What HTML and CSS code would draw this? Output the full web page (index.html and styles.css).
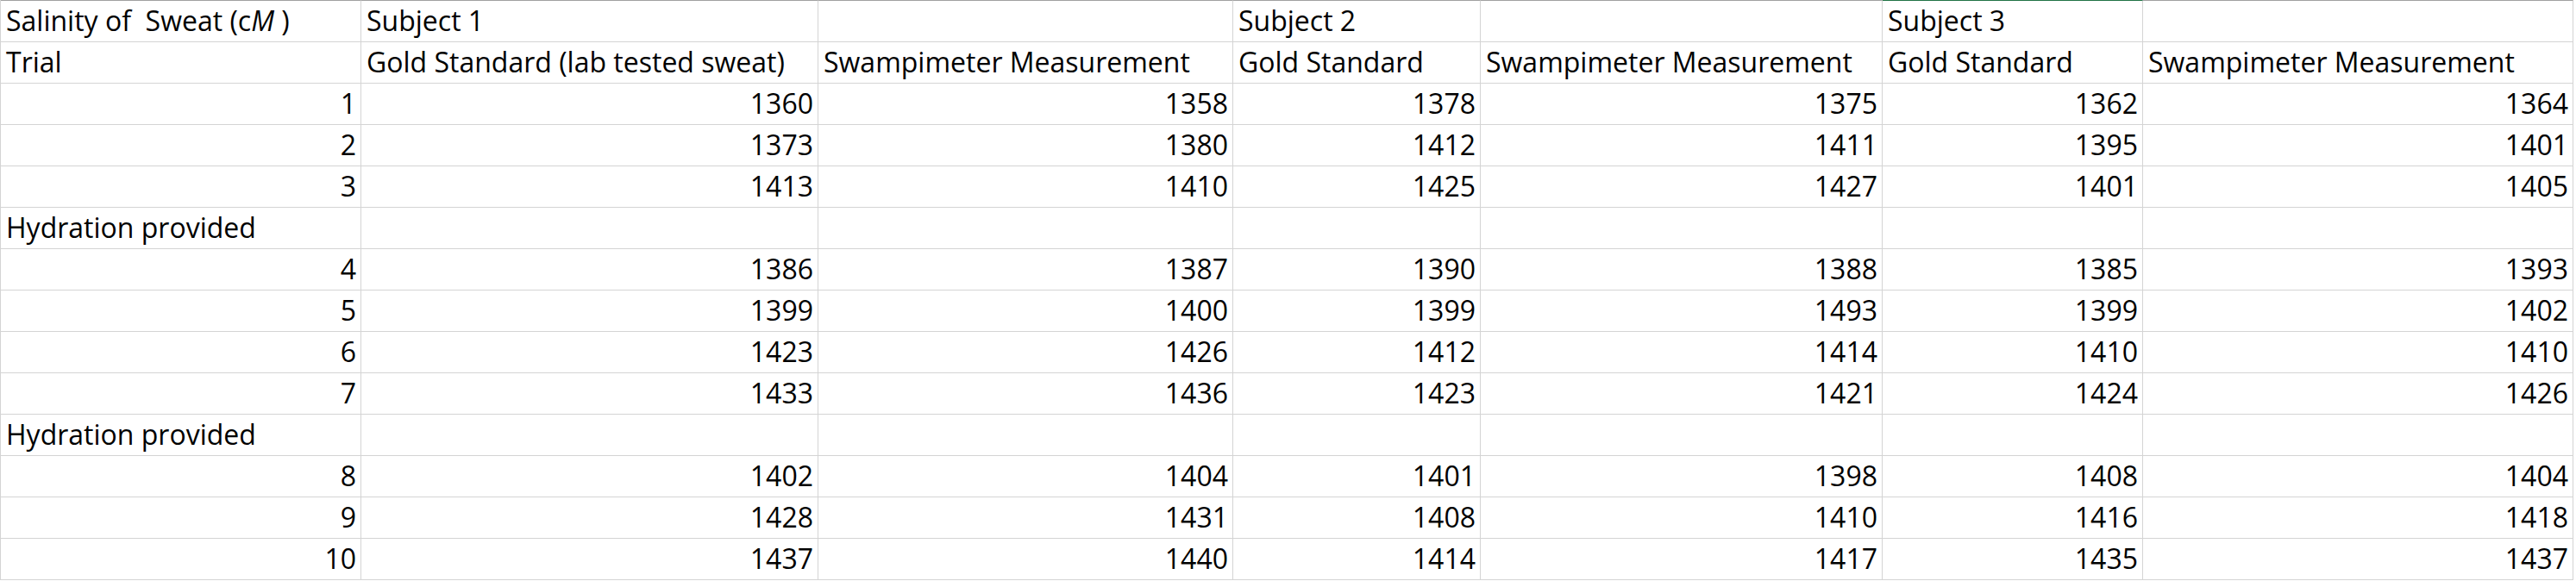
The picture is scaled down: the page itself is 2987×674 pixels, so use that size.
FILE: index.html
```html
<!DOCTYPE html>
<html lang="en">
<head>
<meta charset="utf-8">
<title>Salinity of Sweat</title>
<link rel="stylesheet" href="styles.css">
</head>
<body>
<div class="sheet">
  <div class="cell top">Salinity of  Sweat (c<i>M</i> )</div>
  <div class="cell top">Subject 1</div>
  <div class="cell top"></div>
  <div class="cell top">Subject 2</div>
  <div class="cell top"></div>
  <div class="cell top active">Subject 3</div>
  <div class="cell top"></div>

  <div class="cell">Trial</div>
  <div class="cell">Gold Standard (lab tested sweat)</div>
  <div class="cell">Swampimeter Measurement</div>
  <div class="cell">Gold Standard</div>
  <div class="cell">Swampimeter Measurement</div>
  <div class="cell">Gold Standard</div>
  <div class="cell">Swampimeter Measurement</div>

  <div class="cell num">1</div><div class="cell num">1360</div><div class="cell num">1358</div><div class="cell num">1378</div><div class="cell num">1375</div><div class="cell num">1362</div><div class="cell num">1364</div>
  <div class="cell num">2</div><div class="cell num">1373</div><div class="cell num">1380</div><div class="cell num">1412</div><div class="cell num">1411</div><div class="cell num">1395</div><div class="cell num">1401</div>
  <div class="cell num">3</div><div class="cell num">1413</div><div class="cell num">1410</div><div class="cell num">1425</div><div class="cell num">1427</div><div class="cell num">1401</div><div class="cell num">1405</div>

  <div class="cell">Hydration provided</div><div class="cell"></div><div class="cell"></div><div class="cell"></div><div class="cell"></div><div class="cell"></div><div class="cell"></div>

  <div class="cell num">4</div><div class="cell num">1386</div><div class="cell num">1387</div><div class="cell num">1390</div><div class="cell num">1388</div><div class="cell num">1385</div><div class="cell num">1393</div>
  <div class="cell num">5</div><div class="cell num">1399</div><div class="cell num">1400</div><div class="cell num">1399</div><div class="cell num">1493</div><div class="cell num">1399</div><div class="cell num">1402</div>
  <div class="cell num">6</div><div class="cell num">1423</div><div class="cell num">1426</div><div class="cell num">1412</div><div class="cell num">1414</div><div class="cell num">1410</div><div class="cell num">1410</div>
  <div class="cell num">7</div><div class="cell num">1433</div><div class="cell num">1436</div><div class="cell num">1423</div><div class="cell num">1421</div><div class="cell num">1424</div><div class="cell num">1426</div>

  <div class="cell">Hydration provided</div><div class="cell"></div><div class="cell"></div><div class="cell"></div><div class="cell"></div><div class="cell"></div><div class="cell"></div>

  <div class="cell num">8</div><div class="cell num">1402</div><div class="cell num">1404</div><div class="cell num">1401</div><div class="cell num">1398</div><div class="cell num">1408</div><div class="cell num">1404</div>
  <div class="cell num">9</div><div class="cell num">1428</div><div class="cell num">1431</div><div class="cell num">1408</div><div class="cell num">1410</div><div class="cell num">1416</div><div class="cell num">1418</div>
  <div class="cell num">10</div><div class="cell num">1437</div><div class="cell num">1440</div><div class="cell num">1414</div><div class="cell num">1417</div><div class="cell num">1435</div><div class="cell num">1437</div>
</div>
</body>
</html>
```

FILE: styles.css
```css
html, body {
  margin: 0;
  padding: 0;
  background: #ffffff;
}

.sheet {
  display: grid;
  grid-template-columns: 418px 530px 481px 287px 466px 302px 499px;
  width: max-content;
  border-left: 1px solid #d4d4d4;
  font-family: "Open Sans", "Noto Sans", sans-serif;
  font-size: 32px;
  color: #000000;
}

.cell {
  box-sizing: border-box;
  height: 48px;
  padding: 0 5px 5px 6px;
  border-right: 1px solid #d4d4d4;
  border-bottom: 1px solid #d4d4d4;
  display: flex;
  align-items: flex-end;
  justify-content: flex-start;
  white-space: pre;
  line-height: 1.2;
}

.cell.top {
  height: 49px;
  border-top: 1px solid #a0a0a0;
}

.cell.top.active {
  border-top-color: #217346;
}

.cell.num {
  justify-content: flex-end;
}

.cell i {
  font-style: italic;
}
```
